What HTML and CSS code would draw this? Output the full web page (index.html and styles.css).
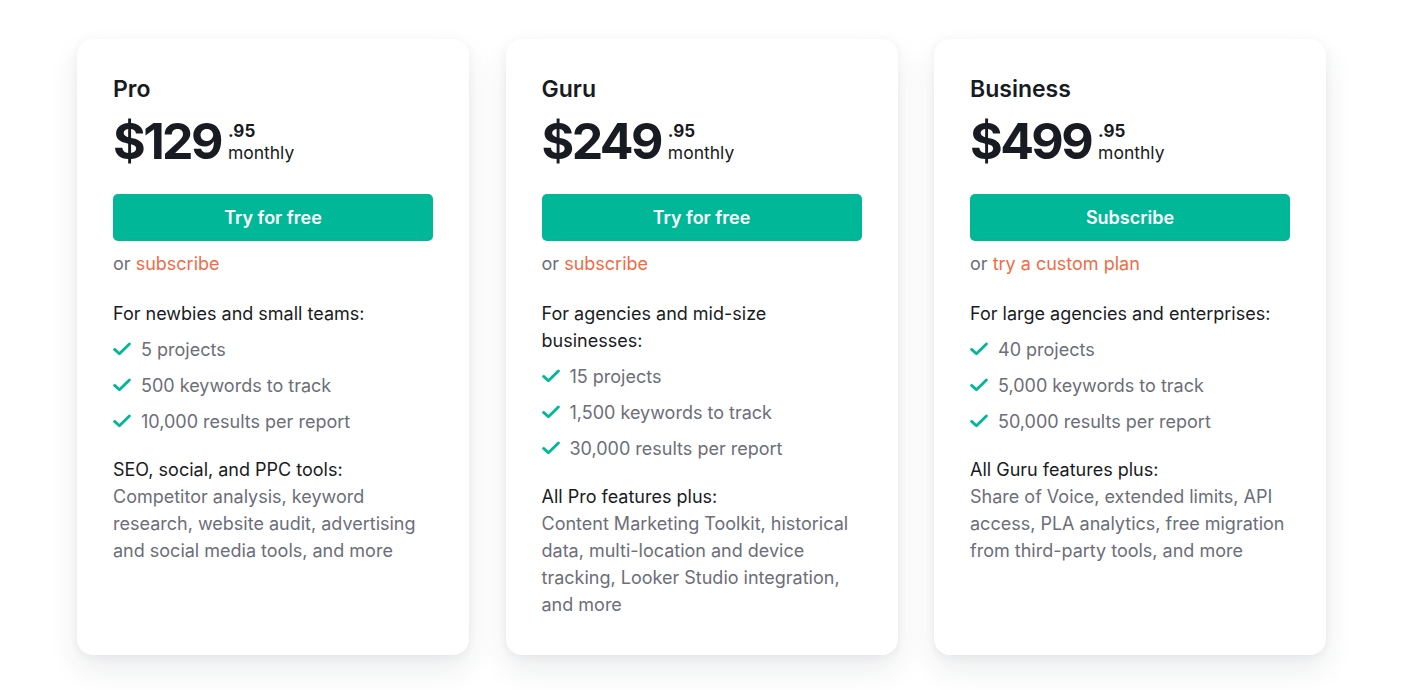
FILE: index.html
```html
<!DOCTYPE html>
<html lang="en">
<head>
<meta charset="utf-8">
<title>Pricing</title>
<link rel="stylesheet" href="styles.css">
</head>
<body>
<main class="plans">
  <section class="card">
    <h2 class="plan-name">Pro</h2>
    <div class="price"><span class="amount">$129</span><span class="side"><span class="cents">.95</span><span class="period">monthly</span></span></div>
    <a class="btn">Try for free</a>
    <p class="alt">or <a class="alt-link">subscribe</a></p>
    <p class="for">For newbies and small teams:</p>
    <ul class="feats">
      <li><svg class="chk" viewBox="0 0 18 14"><path d="M1.6 7.4l4.8 4.4L16.4 2"/></svg>5 projects</li>
      <li><svg class="chk" viewBox="0 0 18 14"><path d="M1.6 7.4l4.8 4.4L16.4 2"/></svg>500 keywords to track</li>
      <li><svg class="chk" viewBox="0 0 18 14"><path d="M1.6 7.4l4.8 4.4L16.4 2"/></svg>10,000 results per report</li>
    </ul>
    <p class="for">SEO, social, and PPC tools:</p>
    <p class="desc">Competitor analysis, keyword research, website audit, advertising and social media tools, and more</p>
  </section>
  <section class="card">
    <h2 class="plan-name">Guru</h2>
    <div class="price"><span class="amount">$249</span><span class="side"><span class="cents">.95</span><span class="period">monthly</span></span></div>
    <a class="btn">Try for free</a>
    <p class="alt">or <a class="alt-link">subscribe</a></p>
    <p class="for">For agencies and mid-size businesses:</p>
    <ul class="feats">
      <li><svg class="chk" viewBox="0 0 18 14"><path d="M1.6 7.4l4.8 4.4L16.4 2"/></svg>15 projects</li>
      <li><svg class="chk" viewBox="0 0 18 14"><path d="M1.6 7.4l4.8 4.4L16.4 2"/></svg>1,500 keywords to track</li>
      <li><svg class="chk" viewBox="0 0 18 14"><path d="M1.6 7.4l4.8 4.4L16.4 2"/></svg>30,000 results per report</li>
    </ul>
    <p class="for">All Pro features plus:</p>
    <p class="desc">Content Marketing Toolkit, historical data, multi-location and device tracking, Looker Studio integration, and more</p>
  </section>
  <section class="card">
    <h2 class="plan-name">Business</h2>
    <div class="price"><span class="amount">$499</span><span class="side"><span class="cents">.95</span><span class="period">monthly</span></span></div>
    <a class="btn">Subscribe</a>
    <p class="alt">or <a class="alt-link">try a custom plan</a></p>
    <p class="for">For large agencies and enterprises:</p>
    <ul class="feats">
      <li><svg class="chk" viewBox="0 0 18 14"><path d="M1.6 7.4l4.8 4.4L16.4 2"/></svg>40 projects</li>
      <li><svg class="chk" viewBox="0 0 18 14"><path d="M1.6 7.4l4.8 4.4L16.4 2"/></svg>5,000 keywords to track</li>
      <li><svg class="chk" viewBox="0 0 18 14"><path d="M1.6 7.4l4.8 4.4L16.4 2"/></svg>50,000 results per report</li>
    </ul>
    <p class="for">All Guru features plus:</p>
    <p class="desc">Share of Voice, extended limits, API access, PLA analytics, free migration from third-party tools, and more</p>
  </section>
</main>
</body>
</html>
```

FILE: styles.css
```css
* { box-sizing: border-box; }
html, body { margin: 0; padding: 0; background: #ffffff; }
body {
  font-family: Inter, "Noto Sans", sans-serif;
  color: #191b23;
  -webkit-font-smoothing: antialiased;
}
.plans {
  display: grid;
  grid-template-columns: repeat(3, 392px);
  column-gap: 36.5px;
  justify-content: center;
  padding: 39px 0 40px 0;
}
.card {
  background: #fff;
  border-radius: 16px;
  height: 616px;
  padding: 35px 36px 0 36px;
  box-shadow: 0 14px 30px rgba(30, 40, 60, 0.09), 0 2px 10px rgba(30, 40, 60, 0.05);
}
.plan-name {
  margin: 0;
  font-size: 23px;
  line-height: 30px;
  font-weight: 600;
  color: #191b23;
}
.price {
  display: flex;
  align-items: flex-start;
  margin-top: 9px;
  height: 56px;
}
.amount {
  font-size: 50px;
  line-height: 56px;
  font-weight: 700;
  letter-spacing: -2.6px;
  color: #191b23;
}
.side {
  display: flex;
  flex-direction: column;
  margin-left: 7px;
  padding-top: 8px;
}
.cents {
  font-size: 17px;
  line-height: 20px;
  font-weight: 700;
}
.period {
  margin-top: 1px;
  font-size: 17.5px;
  line-height: 22px;
  color: #191b23;
}
.btn {
  display: flex;
  align-items: center;
  justify-content: center;
  margin-top: 25px;
  height: 47px;
  border-radius: 5px;
  background: #00b897;
  color: #fff;
  font-size: 18px;
  font-weight: 600;
}
.alt {
  margin: 9px 0 0 0;
  font-size: 18px;
  line-height: 27px;
  color: #6c6e79;
}
.alt-link { color: #f26b47; }
.for {
  margin: 23px 0 0 0;
  font-size: 18px;
  line-height: 27px;
  color: #191b23;
}
.feats {
  list-style: none;
  margin: 4px 0 0 0;
  padding: 0;
}
.feats li {
  display: flex;
  align-items: center;
  height: 36px;
  font-size: 18px;
  color: #6c6e79;
}
.chk {
  flex: none;
  width: 18px;
  height: 14px;
  margin-right: 10px;
  fill: none;
  stroke: #00b897;
  stroke-width: 2.8;
  stroke-linecap: round;
  stroke-linejoin: round;
}
.feats + .for { margin-top: 17px; }
.desc {
  margin: 0;
  font-size: 18px;
  line-height: 27px;
  color: #6c6e79;
}
```
